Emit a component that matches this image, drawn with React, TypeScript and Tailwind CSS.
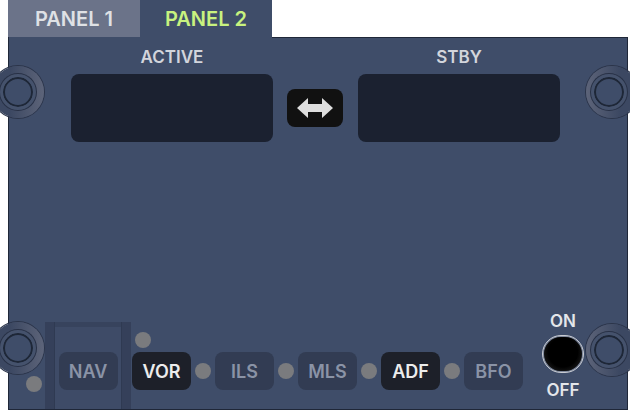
const FONT = "font-['Inter','Liberation_Sans',sans-serif]";

const Screw = ({ side, top }: { side: 'left' | 'right'; top: string }) => (
    <div className={`absolute ${top} ${side === 'left' ? 'left-[-8px]' : 'left-[586px]'} w-[52px] h-[52px] z-10`}>
        <div
            className={`absolute inset-0 rounded-full ${
                side === 'left'
                    ? 'bg-[linear-gradient(90deg,#3c4862_35%,#5d6479_100%)]'
                    : 'bg-[linear-gradient(270deg,#3c4862_35%,#5d6479_100%)]'
            } shadow-[0_0_0_1px_#2c354a]`}
        />
        <div
            className={`absolute top-[8px] ${side === 'left' ? 'left-[8px]' : 'left-[5px]'} w-[36px] h-[36px] rounded-full bg-[#3f4d69] border-[3px] border-[#45526c] shadow-[inset_0_0_0_2px_#1e2737,0_0_0_1px_#283146]`}
        />
    </div>
);

const Dot = ({ className = '' }: { className?: string }) => (
    <div className={`w-4 h-4 rounded-full bg-[#7a7b7e] shrink-0 ${className}`} />
);

const ModeButton = ({ label, active }: { label: string; active?: boolean }) => (
    <div
        className={`w-[59px] h-[38px] rounded-lg flex items-center justify-center text-[18px] font-semibold shrink-0 ${
            active ? 'bg-[#1d2029] text-[#ececec]' : 'bg-[#323c53] text-[#8a93a6]'
        }`}
    >
        {label}
    </div>
);

const SwapArrow = () => (
    <svg width="38" height="22" viewBox="0 0 38 22">
        <path d="M1 11 L12 1 L12 7 L26 7 L26 1 L37 11 L26 21 L26 15 L12 15 L12 21 Z" fill="#dedede" />
    </svg>
);

export default function App() {
    return (
        <div className={`relative w-[630px] h-[411px] bg-white overflow-hidden ${FONT}`}>
            {/* Tabs */}
            <div className="flex pl-[8px] h-[37px]">
                <div className="w-[132px] bg-[#6b7389] flex items-center justify-center text-[20px] font-semibold text-[#dfe1e5]">
                    PANEL 1
                </div>
                <div className="w-[132px] bg-[#3f4d69] flex items-center justify-center text-[20px] font-semibold text-[#c8f27f]">
                    PANEL 2
                </div>
            </div>

            {/* Panel */}
            <div className="ml-[8px] w-[620px] h-[373px] bg-[#3f4d69] border border-t-0 border-[#1f2738] flex flex-col justify-between relative">
                <div className="absolute top-0 left-[263px] right-0 h-px bg-[#1f2738]" />

                {/* Frequency displays */}
                <div className="flex items-end pl-[62px] pt-[12px]">
                    <div className="w-[202px] flex flex-col items-center">
                        <div className="text-[17px] font-semibold text-[#d2d5dc] leading-none mb-[8px]">ACTIVE</div>
                        <div className="w-[202px] h-[68px] rounded-lg bg-[#1b2130]" />
                    </div>
                    <div className="ml-[14px] mb-[15px] w-[56px] h-[38px] rounded-lg bg-[#111111] flex items-center justify-center">
                        <SwapArrow />
                    </div>
                    <div className="ml-[15px] w-[202px] flex flex-col items-center">
                        <div className="text-[17px] font-semibold text-[#d2d5dc] leading-none mb-[8px]">STBY</div>
                        <div className="w-[202px] h-[68px] rounded-lg bg-[#1b2130]" />
                    </div>
                </div>

                {/* Mode selectors */}
                <div className="flex items-stretch h-[87px] pl-[17px]">
                    <Dot className="self-end mb-[17px]" />
                    <div className="ml-[3px] w-[86px] h-full flex bg-[#37435d]">
                        <div className="w-[10px] h-full bg-[#35405a] border-r border-[#2f3a52]" />
                        <div className="flex-1 mt-[5px] bg-[#3e4b67] flex items-start justify-center pt-[25px]">
                            <ModeButton label="NAV" />
                        </div>
                        <div className="w-[10px] h-full bg-[#35405a] border-l border-[#2f3a52]" />
                    </div>
                    <div className="flex items-center self-start h-[38px] mt-[30px] gap-[4px] ml-px">
                        <div className="relative">
                            <Dot className="absolute left-[3px] top-[-20px]" />
                            <ModeButton label="VOR" active />
                        </div>
                        <Dot />
                        <ModeButton label="ILS" />
                        <Dot />
                        <ModeButton label="MLS" />
                        <Dot />
                        <ModeButton label="ADF" active />
                        <Dot />
                        <ModeButton label="BFO" />
                    </div>
                    <div className="ml-[18px] flex flex-col items-center w-[44px] mt-[-9px]">
                        <div className="text-[17px] font-semibold text-[#e4e6ea] leading-none">ON</div>
                        <div className="mt-[5px] w-[42px] h-[38px] rounded-full border border-[#c9ccd3] p-px bg-[#3f4d69]">
                            <div className="w-full h-full rounded-full bg-[radial-gradient(circle_at_50%_45%,#000000_55%,#1a1a1a_80%,#3a3a3a_100%)] shadow-[0_0_0_1px_#ffffff55]" />
                        </div>
                        <div className="mt-[9px] text-[17px] font-semibold text-[#e4e6ea] leading-none">OFF</div>
                    </div>
                </div>
            </div>

            <Screw side="left" top="top-[66px]" />
            <Screw side="right" top="top-[66px]" />
            <Screw side="left" top="top-[322px]" />
            <Screw side="right" top="top-[324px]" />
        </div>
    );
}
